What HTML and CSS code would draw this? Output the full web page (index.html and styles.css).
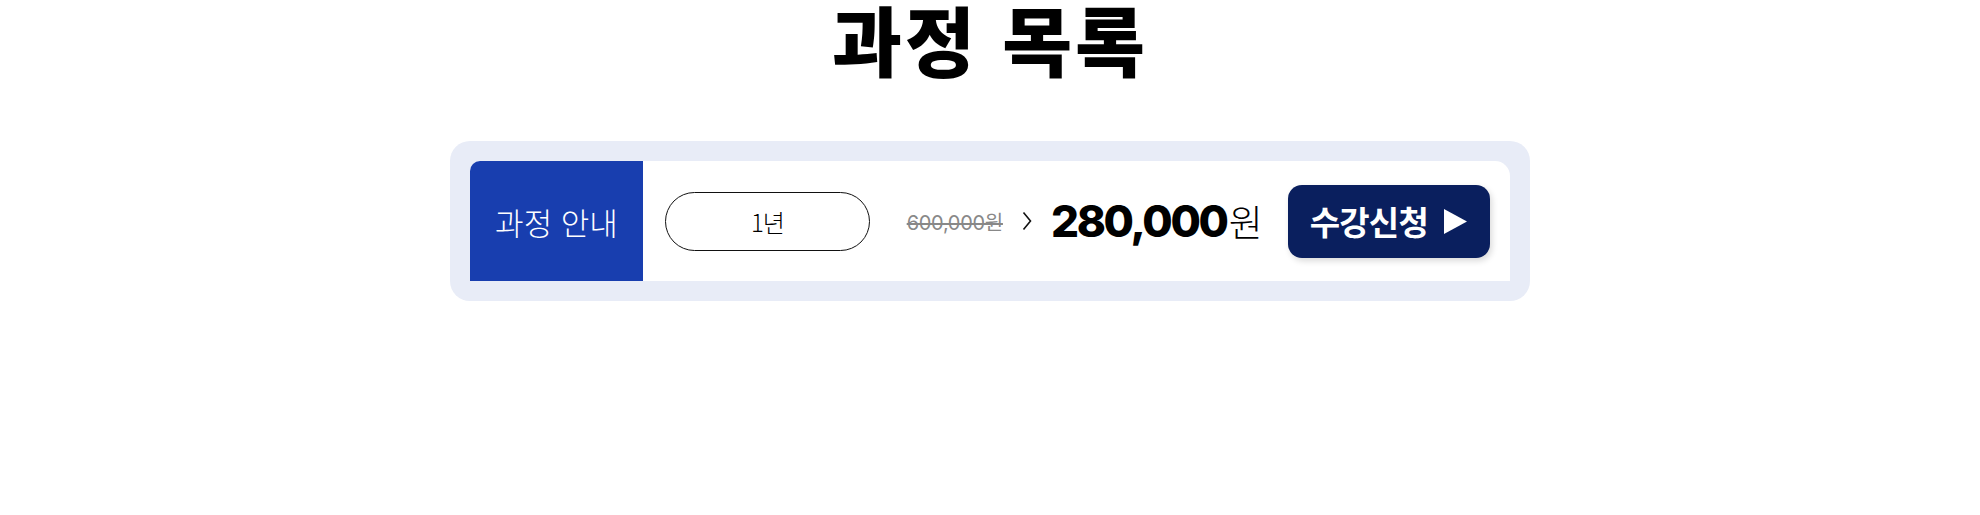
FILE: index.html
```html
<!DOCTYPE html>
<html lang="ko">
<head>
    <meta charset="UTF-8">
    <meta name="viewport" content="width=device-width, initial-scale=1.0">
    <title>과정 목록</title>
    <link rel="stylesheet" href="styles.css">
</head>
<body>
    <h1 class="page-title">과정 목록</h1>

    <div class="course-card">
        <div class="course-row">
            <div class="course-label">과정 안내</div>
            <div class="course-period">1년</div>
            <div class="course-price">
                <span class="price-old">600,000원</span>
                <svg class="price-arrow" width="10" height="20" viewBox="0 0 10 20">
                    <polyline points="1.5,1.5 8.5,10 1.5,18.5" fill="none" stroke="#111" stroke-width="1.6"/>
                </svg>
                <span class="price-new"><b>280,000</b>원</span>
            </div>
            <button class="apply-btn" type="button">
                수강신청
                <svg class="apply-arrow" width="23" height="25" viewBox="0 0 23 25">
                    <polygon points="0,0 23,12.5 0,25" fill="#fff"/>
                </svg>
            </button>
        </div>
    </div>
</body>
</html>
```

FILE: styles.css
```css
body {
    margin: 0;
    background-color: #fff;
    font-family: "Inter", "Noto Sans CJK KR", sans-serif;
    color: #000;
}
.page-title {
    margin: 0;
    padding-top: 2px;
    font-family: "Noto Sans CJK KR", sans-serif;
    font-weight: 900;
    font-size: 76px;
    line-height: 72px;
    text-align: center;
    letter-spacing: 3px;
}
.course-card {
    width: 1040px;
    margin: 67px auto 0;
    padding: 20px;
    background-color: #e8ecf7;
    border-radius: 20px;
}
.course-row {
    display: flex;
    align-items: center;
    height: 120px;
    padding-right: 20px;
    background-color: #fff;
    border-radius: 10px 15px 0 0;
}
.course-label {
    display: flex;
    align-items: center;
    justify-content: center;
    width: 173px;
    height: 100%;
    background-color: #183eaf;
    color: #fff;
    font-family: "Noto Sans CJK KR", sans-serif;
    font-weight: 300;
    font-size: 31px;
    border-radius: 10px 0 0 0;
}
.course-period {
    display: flex;
    align-items: center;
    justify-content: center;
    box-sizing: border-box;
    width: 205px;
    height: 59px;
    margin-left: 22px;
    border: 1px solid #111;
    border-radius: 30px;
    font-family: "Noto Sans CJK KR", sans-serif;
    font-weight: 300;
    font-size: 24px;
    letter-spacing: -1px;
}
.course-price {
    display: flex;
    align-items: center;
    gap: 19px;
    margin-left: auto;
    margin-right: 25px;
}
.price-old {
    color: #888;
    font-size: 20px;
    text-decoration: line-through;
    letter-spacing: -0.3px;
}
.price-new {
    font-size: 37px;
    font-weight: 300;
    line-height: 1;
}
.price-new b {
    font-size: 44px;
    font-weight: 800;
    letter-spacing: -2.3px;
    margin-right: 2px;
}
.apply-btn {
    display: flex;
    align-items: center;
    gap: 16px;
    height: 73px;
    padding: 0 23px 0 22px;
    border: none;
    border-radius: 14px;
    background-color: #0a1f5e;
    color: #fff;
    font-family: "Noto Sans CJK KR", sans-serif;
    font-weight: 700;
    font-size: 33px;
    letter-spacing: -0.8px;
    box-shadow: 2px 3px 6px rgba(0,0,0,0.15);
    cursor: pointer;
}
```
